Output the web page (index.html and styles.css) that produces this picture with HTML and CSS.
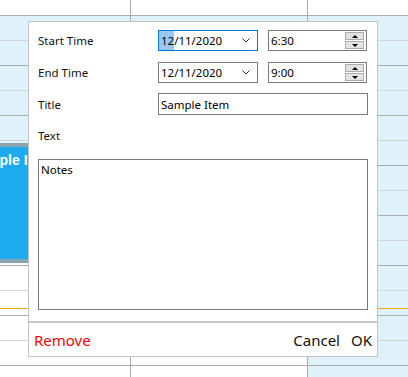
FILE: index.html
```html
<!DOCTYPE html>
<html>
<head>
<meta charset="utf-8">
<link rel="stylesheet" href="styles.css">
</head>
<body>
<div class="calendar">
  <div class="col col-a">
    <div class="head"></div>
    <div class="slot half work"></div><div class="slot hour work"></div>
    <div class="slot half work"></div><div class="slot hour work"></div>
    <div class="slot half work"></div><div class="slot hour work"></div>
    <div class="slot half work"></div><div class="slot hour work"></div>
    <div class="slot half work"></div><div class="slot hour"></div>
    <div class="slot half"></div><div class="slot hour"></div>
    <div class="slot half"></div><div class="slot hour"></div>
    <div class="slot half"></div>
  </div>
  <div class="col col-b">
    <div class="head"></div>
    <div class="slot half work"></div><div class="slot hour work"></div>
    <div class="slot half work"></div><div class="slot hour work"></div>
    <div class="slot half work"></div><div class="slot hour work"></div>
    <div class="slot half work"></div><div class="slot hour work"></div>
    <div class="slot half work"></div><div class="slot hour"></div>
    <div class="slot half"></div><div class="slot hour"></div>
    <div class="slot half"></div><div class="slot hour"></div>
    <div class="slot half"></div>
  </div>
  <div class="col col-c">
    <div class="head"></div>
    <div class="slot half work"></div><div class="slot hour work"></div>
    <div class="slot half work"></div><div class="slot hour work"></div>
    <div class="slot half work"></div><div class="slot hour work"></div>
    <div class="slot half work"></div><div class="slot hour work"></div>
    <div class="slot half work"></div><div class="slot hour work"></div>
    <div class="slot half work"></div><div class="slot hour work"></div>
    <div class="slot half work"></div><div class="slot hour work"></div>
    <div class="slot half work"></div>
  </div>
  <div class="now-line"></div>
  <div class="appt">Sample Item</div>
</div>

<div class="dialog">
  <div class="form">
    <div class="row">
      <span class="lbl">Start Time</span>
      <div class="field date focused">
        <span class="val"><span class="sel">12</span>/11/2020</span>
        <svg class="chev" width="8" height="5" viewBox="0 0 8 5"><polyline points="0.5,0.5 4,4 7.5,0.5" fill="none" stroke="#333" stroke-width="1"/></svg>
      </div>
      <div class="field time">
        <span class="val">6:30</span>
        <div class="spin"><span class="up"></span><span class="down"></span></div>
      </div>
    </div>
    <div class="row row2">
      <span class="lbl">End Time</span>
      <div class="field date">
        <span class="val">12/11/2020</span>
        <svg class="chev" width="8" height="5" viewBox="0 0 8 5"><polyline points="0.5,0.5 4,4 7.5,0.5" fill="none" stroke="#333" stroke-width="1"/></svg>
      </div>
      <div class="field time">
        <span class="val">9:00</span>
        <div class="spin"><span class="up"></span><span class="down"></span></div>
      </div>
    </div>
    <div class="row row3">
      <span class="lbl">Title</span>
      <div class="field wide"><span class="val">Sample Item</span></div>
    </div>
    <div class="row row4">
      <span class="lbl">Text</span>
    </div>
    <div class="notes">Notes</div>
  </div>
  <div class="footer">
    <span class="remove">Remove</span>
    <span class="cancel">Cancel</span>
    <span class="ok">OK</span>
  </div>
</div>
</body>
</html>
```
FILE: styles.css
```css
html, body {
  margin: 0;
  padding: 0;
}
body {
  width: 408px;
  height: 377px;
  overflow: hidden;
  position: relative;
  background: #fff;
  font-family: "Noto Sans", sans-serif;
}
.calendar {
  display: flex;
  height: 377px;
  position: relative;
  overflow: hidden;
}
.col {
  display: flex;
  flex-direction: column;
  border-right: 1px solid #ababab;
  flex: none;
}
.col-a { width: 130px; }
.col-b { width: 176px; }
.col-c { flex: 1; border-right: 0; }
.head {
  height: 15px;
  flex: none;
  border-bottom: 1px solid #ababab;
}
.slot {
  height: 24px;
  flex: none;
  border-bottom: 1px solid #d4d4d4;
}
.slot.hour { border-bottom-color: #ababab; }
.work { background: #dff2fc; }
.now-line {
  position: absolute;
  left: 0;
  right: 0;
  top: 308px;
  height: 1px;
  background: #f7a600;
}
.appt {
  position: absolute;
  left: -38px;
  top: 143px;
  width: 170px;
  height: 120px;
  box-sizing: border-box;
  background: #1daaf1;
  border-top: 4px solid #8aa3b1;
  border-bottom: 4px solid #8aa3b1;
  color: #fff;
  font-family: "Liberation Sans", sans-serif;
  font-weight: 700;
  font-size: 14px;
  line-height: 20px;
  padding: 3px 0 0 8px;
  white-space: nowrap;
}
.dialog {
  position: absolute;
  left: 28px;
  top: 21px;
  width: 350px;
  height: 336px;
  box-sizing: border-box;
  border: 1px solid #c3c3c3;
  background: #fff;
  display: flex;
  flex-direction: column;
  font-size: 11.5px;
  color: #000;
}
.form {
  padding: 8px 9px 0;
}
.row {
  display: flex;
  align-items: center;
  height: 21px;
}
.row2 { margin-top: 11px; }
.row3 { margin-top: 10px; height: 22px; }
.row4 { margin-top: 9px; height: 22px; }
.lbl {
  width: 120px;
  flex: none;
  color: #111;
}
.field {
  box-sizing: border-box;
  height: 100%;
  border: 1px solid #7a7a7a;
  display: flex;
  align-items: center;
  flex: none;
}
.date { width: 100px; margin-right: 10px; }
.time { width: 99px; }
.wide { width: 210px; }
.focused { border-color: #0078d7; }
.val {
  padding-left: 2px;
  line-height: 19px;
  white-space: nowrap;
}
.sel {
  display: inline-block;
  background: #99c9ef;
  margin-left: -2px;
  padding-left: 2px;
}
.chev {
  margin-left: auto;
  margin-right: 7px;
  display: block;
}
.spin {
  margin-left: auto;
  margin-right: 2px;
  display: flex;
  flex-direction: column;
  gap: 1px;
}
.spin span {
  width: 19px;
  height: 8px;
  box-sizing: border-box;
  border: 1px solid #acacac;
  background: #e3e3e3;
  display: flex;
  align-items: center;
  justify-content: center;
}
.spin .up::after {
  content: "";
  border-left: 3px solid transparent;
  border-right: 3px solid transparent;
  border-bottom: 3px solid #000;
}
.spin .down::after {
  content: "";
  border-left: 3px solid transparent;
  border-right: 3px solid transparent;
  border-top: 3px solid #000;
}
.notes {
  margin-top: 13px;
  width: 330px;
  height: 151px;
  box-sizing: border-box;
  border: 1px solid #7a7a7a;
  padding: 2px;
  line-height: 16px;
}
.footer {
  margin-top: auto;
  height: 35px;
  box-sizing: border-box;
  border-top: 2px solid #c8c8c8;
  display: flex;
  align-items: center;
  padding: 0 5px;
  font-size: 15px;
  color: #111;
}
.remove {
  color: #f00;
  margin-right: auto;
}
.ok { margin-left: 11px; }
```
